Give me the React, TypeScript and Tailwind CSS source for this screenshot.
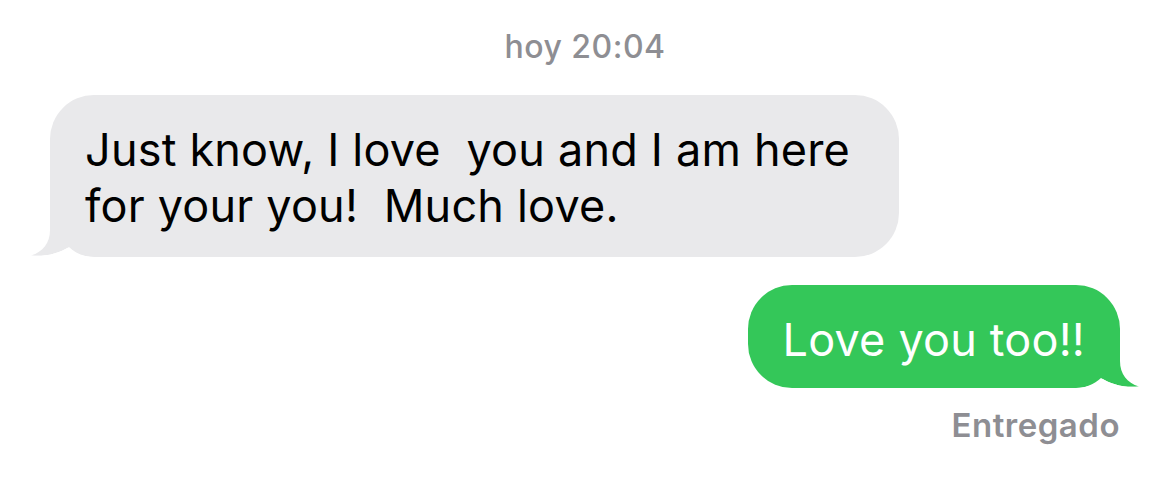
const Tail = ({ color, flip }: { color: string; flip?: boolean }) => {
  return (
    <svg
      width="70"
      height="46"
      viewBox="0 0 70 46"
      className={
        flip
          ? "absolute -right-[20px] -bottom-px -scale-x-100"
          : "absolute -left-[20px] -bottom-px"
      }
    >
      <path d="M20,0 L20,18 C20,31 13,40 1,43.5 C16,45 30,41 39,35 L62,35 L62,0 Z" fill={color} />
      <path d="M1,43.5 C16,45 30,41 39,35 C46,41.5 54,45 68,46 L0,46 Z" fill="#ffffff" />
    </svg>
  );
};

export default function App() {
  return (
    <div className="w-[1170px] h-[493px] bg-white px-[50px] pt-[27px] font-['Inter','Liberation_Sans',sans-serif] overflow-hidden">
      <div className="h-[40px] leading-[40px] text-center text-[32px] font-medium tracking-[0.5px] text-[#8e8e93]">
        hoy 20:04
      </div>

      <div className="mt-[28px] flex">
        <div className="relative w-[849px] rounded-[44px] bg-[#e9e9eb] pl-[35px] pr-[30px] pt-[27px] pb-[23px]">
          <Tail color="#e9e9eb" />
          <p className="relative whitespace-pre-wrap text-[45px] leading-[56px] tracking-[0.2px] text-black">
            {"Just know, I love  you and I am here for your you!  Much love."}
          </p>
        </div>
      </div>

      <div className="mt-[28px] flex justify-end">
        <div className="relative rounded-[44px] bg-[#34c759] pl-[35px] pr-[35px] pt-[27px] pb-[20px]">
          <Tail color="#34c759" flip />
          <p className="relative whitespace-nowrap text-[45px] leading-[56px] tracking-[0.2px] text-white">
            Love you too!!
          </p>
        </div>
      </div>

      <div className="mt-[17px] flex justify-end">
        <span className="h-[40px] leading-[40px] text-[33px] font-semibold tracking-[0.5px] text-[#8e8e93]">Entregado</span>
      </div>
    </div>
  );
}
